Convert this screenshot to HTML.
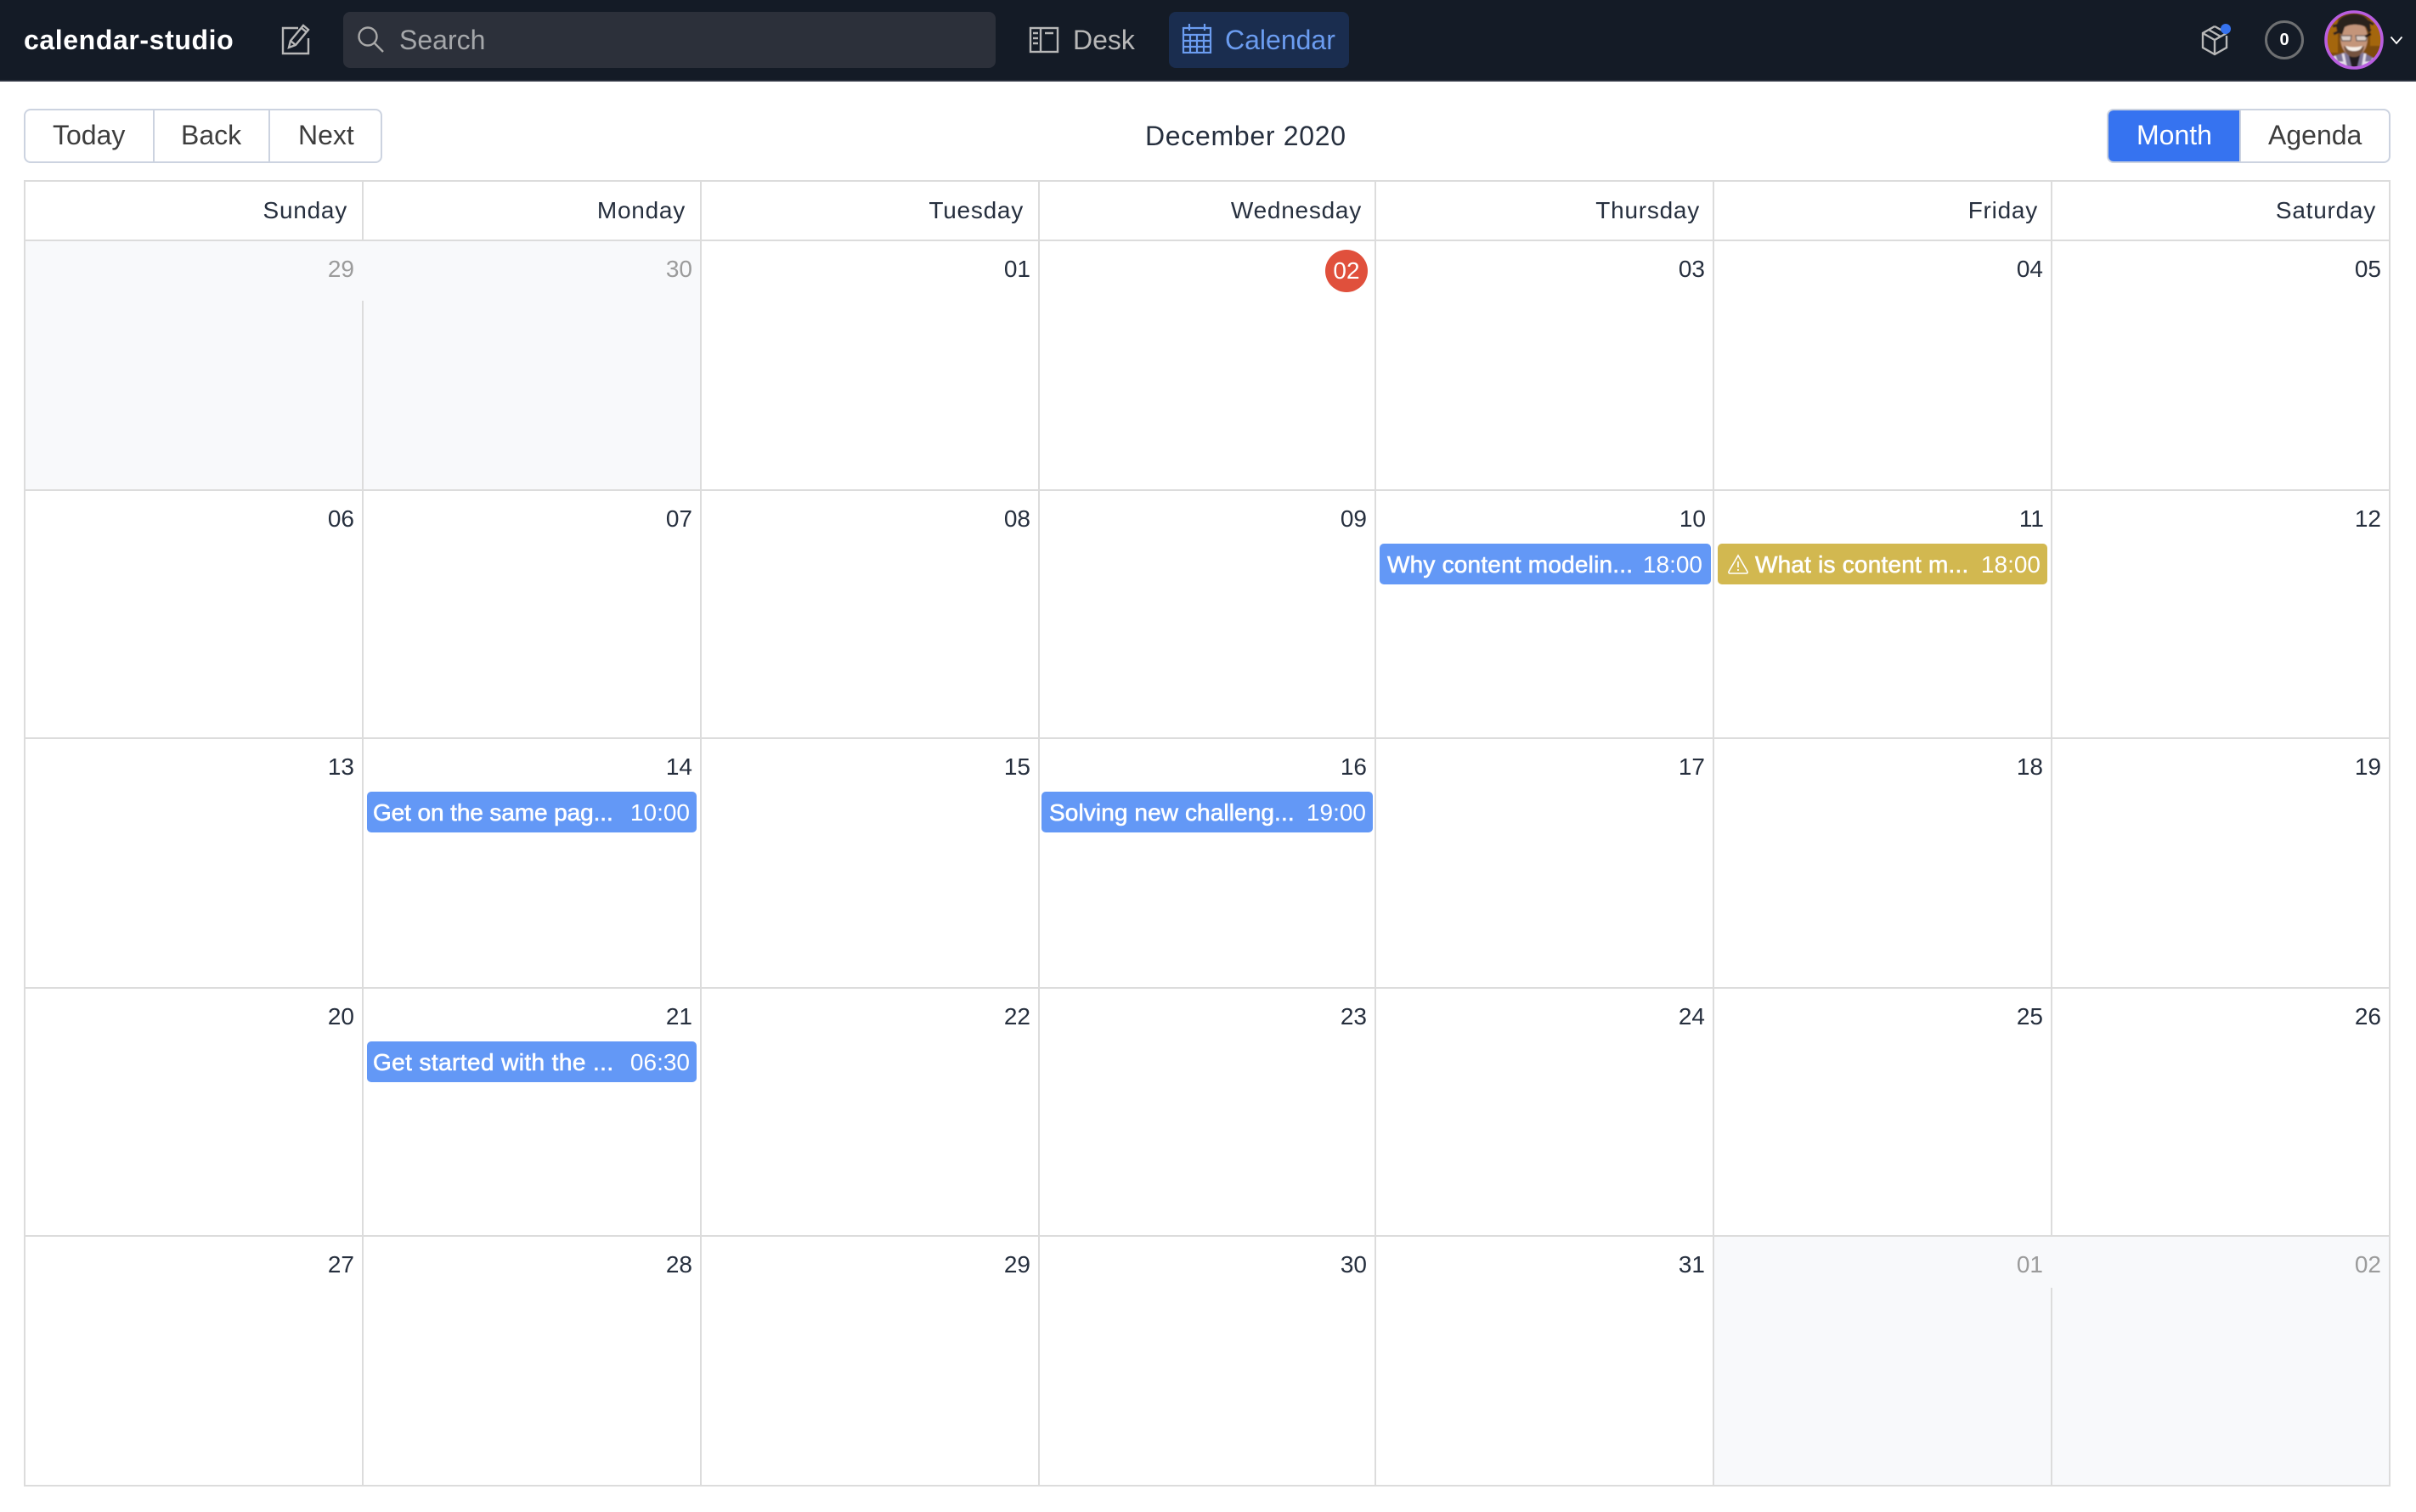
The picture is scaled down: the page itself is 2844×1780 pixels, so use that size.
<!DOCTYPE html>
<html><head><meta charset="utf-8"><title>calendar-studio</title>
<style>
*{box-sizing:border-box}
html,body{margin:0;padding:0;width:2844px;height:1780px;overflow:hidden;background:#fff;font-family:"Liberation Sans",sans-serif}
.a{position:absolute}
.t{position:absolute;white-space:nowrap;line-height:40px;height:40px}
.v{position:absolute;width:2px;background:#dcdcdc}
.h{position:absolute;height:2px;left:28px;width:2786px;background:#dcdcdc}
.d{position:absolute;white-space:nowrap;font-size:28px;line-height:40px;height:40px;color:#262f3e;text-align:right;width:80px}
.o{color:#9b9b9b}
.w{position:absolute;white-space:nowrap;font-size:28px;line-height:40px;height:40px;color:#262f3e;text-align:right;width:200px;top:228px;letter-spacing:.75px}
.e{position:absolute;height:48px;background:#6398f6;border-radius:5px;color:#fff;font-size:28px;line-height:50px;white-space:nowrap}
.e span{position:absolute;top:0}
.e .n{-webkit-text-stroke:.6px #fff}
.btn{position:absolute;top:139px;font-size:32px;line-height:40px;color:#3d3d3d;white-space:nowrap}
</style></head><body>
<div class="a" style="left:0;top:0;width:2844px;height:96px;background:#141b26;border-bottom:2px solid #2c323f"></div>
<div class="t" style="left:28px;top:27px;font-size:32px;font-weight:bold;color:#fff;letter-spacing:.6px">calendar-studio</div>
<svg class="a" style="left:330px;top:27px" width="38" height="38" viewBox="0 0 38 38" fill="none" stroke="#b8b8b8" stroke-width="2.4"><path d="M21 6H3v30h30V18"/><path d="M10 29l2-8L27 3l6 5-15 18z"/><path d="M12 21l6 5M25 6l6 5"/></svg>
<div class="a" style="left:404px;top:14px;width:768px;height:66px;background:#2c303a;border-radius:8px"></div>
<svg class="a" style="left:420px;top:30px" width="34" height="34" viewBox="0 0 34 34" fill="none" stroke="#a9a9a9" stroke-width="2.4"><circle cx="13" cy="13" r="10.5"/><path d="M20.5 20.5L31 31"/></svg>
<div class="t" style="left:470px;top:27px;font-size:32px;color:#a5a7aa">Search</div>
<svg class="a" style="left:1211px;top:31px" width="36" height="32" viewBox="0 0 36 32" fill="none" stroke="#b8b8b8" stroke-width="2.4"><rect x="2" y="2" width="32" height="28"/><path d="M14 2v28M5 8h6M5 14h6M5 20h6M19 8h10"/></svg>
<div class="t" style="left:1263px;top:27px;font-size:32px;color:#b8b8b8">Desk</div>
<div class="a" style="left:1376px;top:14px;width:212px;height:66px;background:#1a2d4f;border-radius:8px"></div>
<svg class="a" style="left:1391px;top:27px" width="36" height="36" viewBox="0 0 36 36" fill="none" stroke="#6b9cf0" stroke-width="2.2"><path d="M2 6h32v29H2zM2 14h32M2 21h32M2 28h32M10 14v21M18 14v21M26 14v21M9 1v8M27 1v8"/></svg>
<div class="t" style="left:1442px;top:27px;font-size:32px;color:#6b9cf0">Calendar</div>
<svg class="a" style="left:2590px;top:28px" width="40" height="38" viewBox="0 0 40 38" fill="none" stroke="#b8b8b8" stroke-width="2.4"><path d="M17 3L3 11v17l14 8 14-8V14"/><path d="M3 11l14 8 14-8M17 19v17M10 7l14 8"/><path d="M17 3l9 5"/></svg>
<div class="a" style="left:2614px;top:28px;width:12px;height:12px;border-radius:50%;background:#3673f0"></div>
<div class="a" style="left:2666px;top:24px;width:46px;height:46px;border:3px solid #6e7072;border-radius:50%;color:#fff;font-size:20px;font-weight:bold;line-height:40px;text-align:center">0</div>
<svg class="a" style="left:2736px;top:12px" width="70" height="70" viewBox="0 0 70 70">
<defs><clipPath id="c"><circle cx="35" cy="35" r="32"/></clipPath><filter id="b" x="-10%" y="-10%" width="120%" height="120%"><feGaussianBlur stdDeviation=".7"/></filter></defs>
<g clip-path="url(#c)"><g filter="url(#b)">
<rect width="70" height="70" fill="#7d4b10"/>
<path d="M0 10h16v40H0zM54 8h16v34H54z" fill="#a4660f"/>
<path d="M2 70l6-15 16-5h22l15 8 5 12z" fill="#7c7396"/>
<path d="M12 54l6 16M22 51l4 19M48 51l-3 19M58 57l-5 13M6 62h18M46 62h18" stroke="#e6dfec" stroke-width="3"/>
<path d="M28 50h15l-5 20h-5z" fill="#241c22"/>
<ellipse cx="35" cy="33" rx="16" ry="22" fill="#c4957a"/>
<path d="M16 26c-5-9 2-18 10-20 8-3 20-2 25 5 4 5 4 11 2 17l-4-8c-7-4-19-4-25 0l-3 9z" fill="#2a201a"/>
<path d="M10 19l8-2M11 28l7-3M52 13l6 4M55 24l-4-2" stroke="#2a201a" stroke-width="3"/>
<path d="M19 30h13l-1 6H21zM37 30h14l-2 6H38z" fill="#e2dad6" opacity=".85" stroke="#4c4648" stroke-width="1.2"/>
<path d="M48 31l7-3" stroke="#14110f" stroke-width="2.6"/>
<path d="M23 42c5 3 19 3 24 0-1 9-6 13-12 13s-11-4-12-13z" fill="#75533f"/>
<path d="M25 42c6 2 14 2 20 0-2 5-5 6-10 6s-8-1-10-6z" fill="#f6efe9"/>
</g></g>
<circle cx="35" cy="35" r="33" fill="none" stroke="#b95ee0" stroke-width="3.6"/>
</svg>
<svg class="a" style="left:2813px;top:42px" width="16" height="12" viewBox="0 0 16 12" fill="none" stroke="#fff" stroke-width="1.8"><path d="M1.500 1.500L8 9l6.500-7.500"/></svg>

<div class="a" style="left:28px;top:128px;width:422px;height:64px;border:2px solid #ccd3e0;border-radius:8px"></div>
<div class="a" style="left:180px;top:128px;width:2px;height:64px;background:#ccd3e0"></div>
<div class="a" style="left:316px;top:128px;width:2px;height:64px;background:#ccd3e0"></div>
<div class="btn" style="left:62px">Today</div>
<div class="btn" style="left:213px">Back</div>
<div class="btn" style="left:351px">Next</div>
<div class="t" style="left:1348px;top:140px;font-size:32px;color:#262f3e;letter-spacing:.7px">December 2020</div>
<div class="a" style="left:2480px;top:128px;width:334px;height:64px;border:2px solid #ccd3e0;border-radius:8px"></div>
<div class="a" style="left:2482px;top:130px;width:154px;height:60px;background:#3673f0;border-radius:6px 0 0 6px"></div>
<div class="a" style="left:2636px;top:128px;width:2px;height:64px;background:#ccd3e0"></div>
<div class="btn" style="left:2515px;color:#fff">Month</div>
<div class="btn" style="left:2670px">Agenda</div>

<div class="a" style="left:30px;top:284px;width:794px;height:292px;background:#f8f9fb"></div>
<div class="a" style="left:2018px;top:1456px;width:794px;height:292px;background:#f8f9fb"></div>

<div class="h" style="top:212px"></div>
<div class="h" style="top:282px"></div>
<div class="h" style="top:576px"></div>
<div class="h" style="top:868px"></div>
<div class="h" style="top:1162px"></div>
<div class="h" style="top:1454px"></div>
<div class="h" style="top:1748px"></div>

<div class="v" style="left:28px;top:212px;height:1538px"></div>
<div class="v" style="left:426px;top:212px;height:72px"></div>
<div class="v" style="left:426px;top:354px;height:1396px"></div>
<div class="v" style="left:824px;top:212px;height:1538px"></div>
<div class="v" style="left:1222px;top:212px;height:1538px"></div>
<div class="v" style="left:1618px;top:212px;height:1538px"></div>
<div class="v" style="left:2016px;top:212px;height:1538px"></div>
<div class="v" style="left:2414px;top:212px;height:1244px"></div>
<div class="v" style="left:2414px;top:1516px;height:234px"></div>
<div class="v" style="left:2812px;top:212px;height:1538px"></div>

<div class="w" style="left:209px">Sunday</div>
<div class="w" style="left:607px">Monday</div>
<div class="w" style="left:1005px">Tuesday</div>
<div class="w" style="left:1403px">Wednesday</div>
<div class="w" style="left:1801px">Thursday</div>
<div class="w" style="left:2199px">Friday</div>
<div class="w" style="left:2597px">Saturday</div>

<div class="d o" style="left:337px;top:297px">29</div>
<div class="d o" style="left:735px;top:297px">30</div>
<div class="d" style="left:1133px;top:297px">01</div>
<div class="a" style="left:1560px;top:294px;width:50px;height:50px;border-radius:50%;background:#e0503c;color:#fff;font-size:28px;line-height:50px;text-align:center">02</div>
<div class="d" style="left:1927px;top:297px">03</div>
<div class="d" style="left:2325px;top:297px">04</div>
<div class="d" style="left:2723px;top:297px">05</div>

<div class="d" style="left:337px;top:591px">06</div>
<div class="d" style="left:735px;top:591px">07</div>
<div class="d" style="left:1133px;top:591px">08</div>
<div class="d" style="left:1529px;top:591px">09</div>
<div class="d" style="left:1928px;top:591px">10</div>
<div class="d" style="left:2326px;top:591px">11</div>
<div class="d" style="left:2723px;top:591px">12</div>

<div class="d" style="left:337px;top:883px">13</div>
<div class="d" style="left:735px;top:883px">14</div>
<div class="d" style="left:1133px;top:883px">15</div>
<div class="d" style="left:1529px;top:883px">16</div>
<div class="d" style="left:1927px;top:883px">17</div>
<div class="d" style="left:2325px;top:883px">18</div>
<div class="d" style="left:2723px;top:883px">19</div>

<div class="d" style="left:337px;top:1177px">20</div>
<div class="d" style="left:735px;top:1177px">21</div>
<div class="d" style="left:1133px;top:1177px">22</div>
<div class="d" style="left:1529px;top:1177px">23</div>
<div class="d" style="left:1927px;top:1177px">24</div>
<div class="d" style="left:2325px;top:1177px">25</div>
<div class="d" style="left:2723px;top:1177px">26</div>

<div class="d" style="left:337px;top:1469px">27</div>
<div class="d" style="left:735px;top:1469px">28</div>
<div class="d" style="left:1133px;top:1469px">29</div>
<div class="d" style="left:1529px;top:1469px">30</div>
<div class="d" style="left:1927px;top:1469px">31</div>
<div class="d o" style="left:2325px;top:1469px">01</div>
<div class="d o" style="left:2723px;top:1469px">02</div>

<div class="e" style="left:1624px;top:640px;width:390px"><span class="n" style="left:9px;letter-spacing:.2px">Why content modelin...</span><span style="right:10px">18:00</span></div>
<div class="e" style="left:2022px;top:640px;width:388px;background:#d2b850">
<svg class="a" style="left:11px;top:12px" width="26" height="24" viewBox="0 0 26 24" fill="none" stroke="#fff" stroke-width="1.6"><path d="M13 2L2 21c-.5 1 .2 2 1 2h20c1 0 1.500-1 1-2z"/><path d="M13 9v7M13 18v2"/></svg>
<span class="n" style="left:44px;letter-spacing:.2px">What is content m...</span><span style="right:8px">18:00</span></div>
<div class="e" style="left:432px;top:932px;width:388px"><span class="n" style="left:7px;letter-spacing:-.1px">Get on the same pag...</span><span style="right:8px">10:00</span></div>
<div class="e" style="left:1226px;top:932px;width:390px"><span class="n" style="left:9px;letter-spacing:.1px">Solving new challeng...</span><span style="right:8px">19:00</span></div>
<div class="e" style="left:432px;top:1226px;width:388px"><span class="n" style="left:7px;letter-spacing:.4px">Get started with the ...</span><span style="right:8px">06:30</span></div>
</body></html>
